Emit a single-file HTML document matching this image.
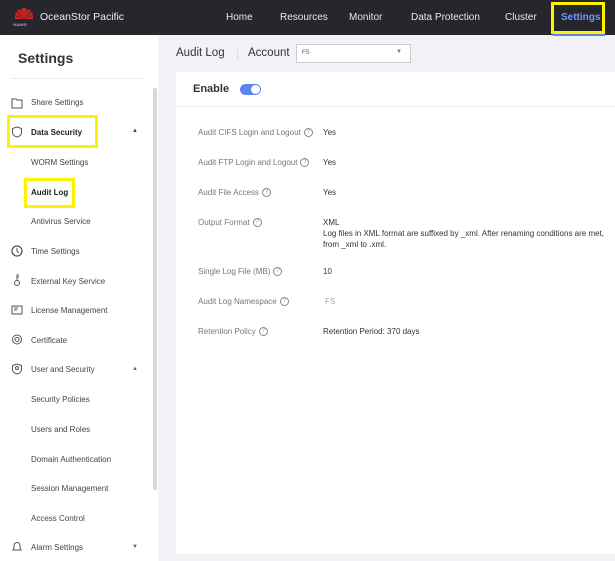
<!DOCTYPE html>
<html><head><meta charset="utf-8"><style>
*{margin:0;padding:0;box-sizing:border-box}
body{width:615px;height:561px;overflow:hidden;background:#f1f2f7;font-family:"Liberation Sans",sans-serif;position:relative;color:#333}
.a{position:absolute;white-space:nowrap}
.hdr{left:0;top:0;width:615px;height:35px;background:#26272d}
.nav{color:#e8e8e8;font-size:10px;top:12px}
.side{left:0;top:35px;width:158px;height:526px;background:#fff}
.si{font-size:8px;color:#444}
.ico{position:absolute;left:11px;width:12px;height:12px}
.lab{font-size:8px;color:#777}
.val{font-size:8px;color:#333}
.q{display:inline-block;width:9px;height:9px;border:1px solid #888;border-radius:50%;font-size:6px;line-height:7px;text-align:center;color:#888;vertical-align:middle;margin-left:3px}
.yb{border:3px solid #fff200}
</style></head><body>
<div class="a hdr"></div>
<svg class="a" style="left:12px;top:7px" width="24" height="20" viewBox="0 0 24 20"><g fill="#d8201f"><path d="M12 12 L9 2 L12 1 Z"/><path d="M12 12 L15 2 L12 1Z"/><path d="M12 12 L5 4 L8 2Z"/><path d="M12 12 L19 4 L16 2Z"/><path d="M12 12 L3 8 L4 5Z"/><path d="M12 12 L21 8 L20 5Z"/><path d="M12 12 L3 12 L3 9Z"/><path d="M12 12 L21 12 L21 9Z"/></g><text x="1" y="19" font-size="3.5" fill="#ddd" font-family="Liberation Sans">HUAWEI</text></svg>
<div class="a" style="left:40px;top:11px;color:#eee;font-size:10.5px">OceanStor Pacific</div>
<div class="a nav" style="left:226px">Home</div>
<div class="a nav" style="left:280px">Resources</div>
<div class="a nav" style="left:349px">Monitor</div>
<div class="a nav" style="left:411px">Data Protection</div>
<div class="a nav" style="left:505px">Cluster</div>
<div class="a nav" style="left:561px;color:#6e94ff;font-weight:bold">Settings</div>
<div class="a" style="left:553px;top:34px;width:52px;height:2px;background:#5b86f0"></div>
<div class="a yb" style="left:551px;top:2px;width:54px;height:32px"></div>

<div class="a side"></div>
<div class="a" style="left:18px;top:50px;font-size:14px;font-weight:bold;color:#333">Settings</div>
<div class="a" style="left:11px;top:78px;width:133px;border-top:1px dotted #ddd"></div>
<div class="a" style="left:153px;top:88px;width:4px;height:402px;background:#d8d8d8;border-radius:2px"></div>

<svg class="ico" style="top:97px" viewBox="0 0 12 12"><path d="M1 2h4l1 1h5v8H1z" fill="none" stroke="#555"/></svg>
<div class="a si" style="left:31px;top:98px">Share Settings</div>
<svg class="ico" style="top:126px" viewBox="0 0 12 12"><path d="M6 1L1.5 2.5v4C1.5 9 4 10.5 6 11c2-.5 4.5-2 4.5-4.5v-4z" fill="none" stroke="#555"/></svg>
<div class="a si" style="left:31px;top:128px;font-weight:bold;color:#222">Data Security</div>
<div class="a" style="left:132px;top:128px;font-size:6px;color:#444">▲</div>
<div class="a yb" style="left:7px;top:115px;width:91px;height:33px"></div>
<div class="a si" style="left:31px;top:158px">WORM Settings</div>
<div class="a si" style="left:31px;top:188px;font-weight:bold;color:#222">Audit Log</div>
<div class="a yb" style="left:24px;top:178px;width:51px;height:30px"></div>
<div class="a si" style="left:31px;top:217px">Antivirus Service</div>
<svg class="ico" style="top:245px" viewBox="0 0 12 12"><circle cx="6" cy="6" r="5" fill="none" stroke="#555" stroke-width="1.3"/><path d="M6 3v3l2 2" stroke="#555" fill="none"/></svg>
<div class="a si" style="left:31px;top:247px">Time Settings</div>
<svg class="ico" style="top:274px" viewBox="0 0 12 12"><circle cx="6" cy="9" r="2.5" fill="none" stroke="#555"/><path d="M6 6.5V1h2M6 3h2" stroke="#555" fill="none"/></svg>
<div class="a si" style="left:31px;top:277px">External Key Service</div>
<svg class="ico" style="top:304px" viewBox="0 0 12 12"><rect x="1" y="2" width="10" height="8" fill="none" stroke="#555"/><path d="M3 4h4M3 6h3" stroke="#555"/></svg>
<div class="a si" style="left:31px;top:306px">License Management</div>
<svg class="ico" style="top:334px" viewBox="0 0 12 12"><circle cx="6" cy="5.5" r="4.5" fill="none" stroke="#555"/><circle cx="6" cy="5.5" r="2" fill="none" stroke="#555"/></svg>
<div class="a si" style="left:31px;top:336px">Certificate</div>
<svg class="ico" style="top:363px" viewBox="0 0 12 12"><path d="M6 1L1.5 2.5v4C1.5 9 4 10.5 6 11c2-.5 4.5-2 4.5-4.5v-4z" fill="none" stroke="#555"/><circle cx="6" cy="5" r="1.5" fill="none" stroke="#555"/></svg>
<div class="a si" style="left:31px;top:365px">User and Security</div>
<div class="a" style="left:132px;top:366px;font-size:6px;color:#666">▲</div>
<div class="a si" style="left:31px;top:395px">Security Policies</div>
<div class="a si" style="left:31px;top:425px">Users and Roles</div>
<div class="a si" style="left:31px;top:455px">Domain Authentication</div>
<div class="a si" style="left:31px;top:484px">Session Management</div>
<div class="a si" style="left:31px;top:514px">Access Control</div>
<svg class="ico" style="top:541px" viewBox="0 0 12 12"><path d="M2 9h8L9 7V4.5a3 3 0 0 0-6 0V7z" fill="none" stroke="#555"/></svg>
<div class="a si" style="left:31px;top:543px">Alarm Settings</div>
<div class="a" style="left:132px;top:544px;font-size:6px;color:#666">▼</div>

<div class="a" style="left:176px;top:47px;font-size:11.5px;color:#333">Audit Log</div>
<div class="a" style="left:237px;top:47px;width:1px;height:13px;background:#ddd"></div>
<div class="a" style="left:248px;top:47px;font-size:11.5px;color:#333">Account</div>
<div class="a" style="left:296px;top:44px;width:115px;height:19px;background:#fff;border:1px solid #ccc"></div>
<div class="a" style="left:302px;top:50px;font-size:6px;color:#555">FS</div>
<div class="a" style="left:396px;top:49px;font-size:6px;color:#777">▼</div>

<div class="a" style="left:176px;top:72px;width:439px;height:482px;background:#fff"></div>
<div class="a" style="left:193px;top:83px;font-size:11px;font-weight:bold;color:#333">Enable</div>
<div class="a" style="left:240px;top:84px;width:21px;height:11px;background:#5b86f0;border-radius:6px"></div>
<div class="a" style="left:251px;top:85px;width:9px;height:9px;background:#fff;border-radius:50%"></div>
<div class="a" style="left:176px;top:106px;width:439px;height:1px;background:#eee"></div>

<div class="a lab" style="left:198px;top:128px">Audit CIFS Login and Logout<span class="q">?</span></div><div class="a val" style="left:323px;top:128px">Yes</div>
<div class="a lab" style="left:198px;top:158px">Audit FTP Login and Logout<span class="q">?</span></div><div class="a val" style="left:323px;top:158px">Yes</div>
<div class="a lab" style="left:198px;top:188px">Audit File Access<span class="q">?</span></div><div class="a val" style="left:323px;top:188px">Yes</div>
<div class="a lab" style="left:198px;top:218px">Output Format<span class="q">?</span></div>
<div class="a val" style="left:323px;top:218px">XML</div>
<div class="a val" style="left:323px;top:229px;font-size:8px">Log files in XML format are suffixed by _xml. After renaming conditions are met,</div>
<div class="a val" style="left:323px;top:240px;font-size:8px">from _xml to .xml.</div>
<div class="a lab" style="left:198px;top:267px">Single Log File (MB)<span class="q">?</span></div><div class="a val" style="left:323px;top:267px">10</div>
<div class="a lab" style="left:198px;top:297px">Audit Log Namespace<span class="q">?</span></div><div class="a val" style="left:325px;top:297px;color:#aaa">FS</div>
<div class="a lab" style="left:198px;top:327px">Retention Policy<span class="q">?</span></div><div class="a val" style="left:323px;top:327px">Retention Period: 370 days</div>
</body></html>
